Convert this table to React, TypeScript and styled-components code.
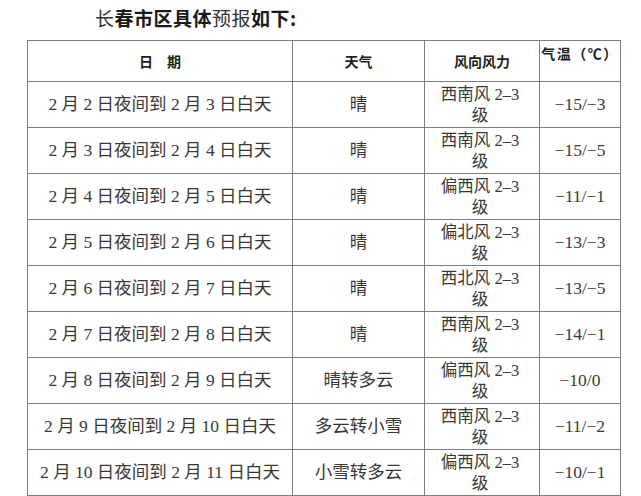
import React from 'react';
import styled, { createGlobalStyle } from 'styled-components';

const GlobalStyle = createGlobalStyle`
  html, body {
    margin: 0;
    padding: 0;
    background: #ffffff;
    overflow: hidden;
  }
`;

const Page = styled.div`
  width: 641px;
  height: 496px;
  overflow: hidden;
  background: #fff;
`;

const Title = styled.h2`
  margin: 0;
  padding-left: 95px;
  height: 40px;
  line-height: 36px;
  font-family: 'Noto Sans CJK SC', sans-serif;
  font-size: 19px;
  font-weight: 700;
  color: #1a1a1a;
  letter-spacing: 0.5px;
`;

const Light = styled.span`
  font-weight: 400;
  color: #333;
`;

const Table = styled.table`
  margin-left: 27px;
  width: 593px;
  border-collapse: collapse;
  table-layout: fixed;
  font-family: 'Liberation Serif', 'Noto Sans CJK SC', serif;
  color: #383838;
`;

const HeadCell = styled.th<{ $top?: boolean }>`
  height: 38px;
  border: 1px solid #7d7d7d;
  padding: 0;
  font-family: 'Noto Sans CJK SC', sans-serif;
  font-size: 14px;
  font-weight: 700;
  color: #1e1e1e;
  text-align: center;
  vertical-align: ${(p) => (p.$top ? 'top' : 'middle')};
  padding-top: ${(p) => (p.$top ? '2px' : '0')};
  letter-spacing: ${(p) => (p.$top ? '1.5px' : '0')};
`;

const Cell = styled.td`
  height: 45px;
  border: 1px solid #7d7d7d;
  padding: 0;
  text-align: center;
  vertical-align: middle;
  font-size: 17.5px;
  line-height: 21px;
  font-weight: 400;
`;

const Wind = styled.div`
  display: flex;
  flex-direction: column;
  align-items: center;
  line-height: 21px;
  font-size: 16.5px;
  padding-right: 4px;
`;

type Row = {
  date: string;
  weather: string;
  wind: string;
  temp: string;
};

const rows: Row[] = [
  { date: '2 月 2 日夜间到 2 月 3 日白天', weather: '晴', wind: '西南风', temp: '−15/−3' },
  { date: '2 月 3 日夜间到 2 月 4 日白天', weather: '晴', wind: '西南风', temp: '−15/−5' },
  { date: '2 月 4 日夜间到 2 月 5 日白天', weather: '晴', wind: '偏西风', temp: '−11/−1' },
  { date: '2 月 5 日夜间到 2 月 6 日白天', weather: '晴', wind: '偏北风', temp: '−13/−3' },
  { date: '2 月 6 日夜间到 2 月 7 日白天', weather: '晴', wind: '西北风', temp: '−13/−5' },
  { date: '2 月 7 日夜间到 2 月 8 日白天', weather: '晴', wind: '西南风', temp: '−14/−1' },
  { date: '2 月 8 日夜间到 2 月 9 日白天', weather: '晴转多云', wind: '偏西风', temp: '−10/0' },
  { date: '2 月 9 日夜间到 2 月 10 日白天', weather: '多云转小雪', wind: '西南风', temp: '−11/−2' },
  { date: '2 月 10 日夜间到 2 月 11 日白天', weather: '小雪转多云', wind: '偏西风', temp: '−10/−1' },
];

export default function App() {
  return (
    <Page>
      <GlobalStyle />
      <Title>
        <Light>长</Light>春市区具体<Light>预报</Light>如下:
      </Title>
      <Table>
        <colgroup>
          <col style={{ width: 265 }} />
          <col style={{ width: 132 }} />
          <col style={{ width: 115 }} />
          <col style={{ width: 81 }} />
        </colgroup>
        <thead>
          <tr>
            <HeadCell>日　期</HeadCell>
            <HeadCell>天气</HeadCell>
            <HeadCell>风向风力</HeadCell>
            <HeadCell $top>气温（℃）</HeadCell>
          </tr>
        </thead>
        <tbody>
          {rows.map((r) => (
            <tr key={r.date}>
              <Cell>{r.date}</Cell>
              <Cell>{r.weather}</Cell>
              <Cell>
                <Wind>
                  <span>{r.wind} 2–3</span>
                  <span>级</span>
                </Wind>
              </Cell>
              <Cell>{r.temp}</Cell>
            </tr>
          ))}
          <tr>
            <Cell />
            <Cell />
            <Cell />
            <Cell />
          </tr>
        </tbody>
      </Table>
    </Page>
  );
}
